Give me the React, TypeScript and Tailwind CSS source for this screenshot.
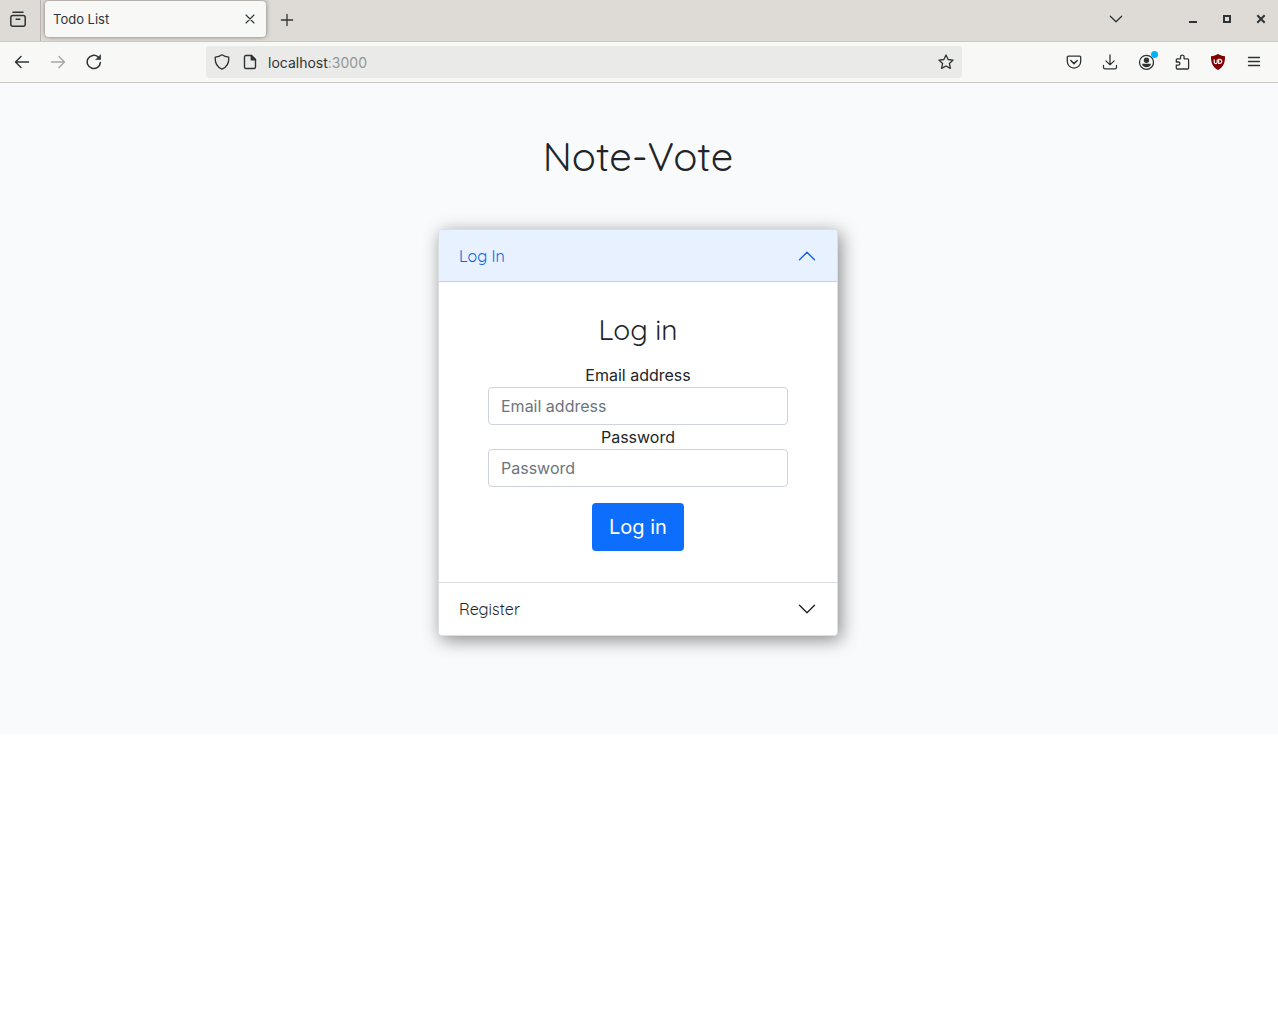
import React, { useState } from "react";

const stroke = {
  fill: "none",
  stroke: "currentColor",
  strokeWidth: 1.3,
  strokeLinecap: "round" as const,
  strokeLinejoin: "round" as const,
};

function Icon({ children, width = 1.3 }: { children: React.ReactNode; width?: number }) {
  return (
    <svg className="size-4 shrink-0" viewBox="0 0 16 16" {...stroke} strokeWidth={width} aria-hidden="true">
      {children}
    </svg>
  );
}

function ToolButton({ label, className = "", children }: { label: string; className?: string; children: React.ReactNode }) {
  return (
    <button type="button" aria-label={label} className={`flex size-8 shrink-0 items-center justify-center ${className}`}>
      {children}
    </button>
  );
}

function TabBar() {
  return (
    <div className="flex h-[42px] items-stretch border-b border-[#cdc7c2] bg-[#dedad5]">
      <div className="flex w-[41px] items-center border-r border-[#b9b4af] pb-1 pl-0.5">
        <ToolButton label="Recent browsing">
          <svg className="size-4" viewBox="0 0 16 16" {...stroke} strokeWidth={1.5} aria-hidden="true">
            <rect x="0.8" y="4.4" width="14.4" height="10.8" rx="2" />
            <path d="M3 1.2h10M6.2 8.2h3.6" />
          </svg>
        </ToolButton>
      </div>
      <div className="ml-1 mt-px flex h-9 w-[221px] items-center justify-between rounded bg-[#f8f8f7] pl-2 shadow-[0_0_4px_rgba(0,0,0,0.45)]">
        <span className="text-[13px] leading-5">Todo List</span>
        <ToolButton label="Close tab">
          <Icon width={1.1}>
            <path d="M4 4l8 8M12 4l-8 8" />
          </Icon>
        </ToolButton>
      </div>
      <ToolButton label="New tab" className="ml-[5px] mt-1">
        <Icon>
          <path d="M8 2.4v11.2M2.4 8h11.2" />
        </Icon>
      </ToolButton>
      <div className="ml-auto flex items-center pb-1">
        <ToolButton label="List all tabs" className="mr-[45px]">
          <Icon>
            <path d="M2.3 5.2L8 10.7l5.7-5.5" />
          </Icon>
        </ToolButton>
        <ToolButton label="Minimize" className="mr-0.5">
          <svg className="size-4" viewBox="0 0 16 16" aria-hidden="true">
            <path d="M4 10h8v2H4z" fill="currentColor" />
          </svg>
        </ToolButton>
        <ToolButton label="Maximize" className="mr-0.5">
          <svg className="size-4" viewBox="0 0 16 16" fill="none" stroke="currentColor" strokeWidth={2} aria-hidden="true">
            <path d="M5 5h6v6H5z" />
          </svg>
        </ToolButton>
        <ToolButton label="Close" className="mr-px">
          <svg className="size-4" viewBox="0 0 16 16" fill="none" stroke="currentColor" strokeWidth={2} aria-hidden="true">
            <path d="M4.300 4.300l7.400 7.400M11.700 4.300l-7.400 7.400" />
          </svg>
        </ToolButton>
      </div>
    </div>
  );
}

function Toolbar() {
  return (
    <div className="flex h-[41px] items-center justify-between border-b border-[#cdc7c2] bg-[#f8f8f7]">
      <div className="flex w-[206px] shrink-0 gap-1 pl-1.5">
        <ToolButton label="Back">
          <Icon width={1.5}>
            <path d="M14.500 8H1.500M7 2.500L1.500 8L7 13.500" />
          </Icon>
        </ToolButton>
        <ToolButton label="Forward" className="opacity-40">
          <Icon width={1.5}>
            <path d="M1.500 8h13M9 2.500L14.500 8L9 13.500" />
          </Icon>
        </ToolButton>
        <ToolButton label="Reload">
          <Icon width={1.5}>
            <path d="M14.400 8.400A6.600 6.600 0 1 1 12.200 3" />
            <path d="M14.600 1v4.600H10z" fill="currentColor" strokeWidth="0.6" />
          </Icon>
        </ToolButton>
      </div>
      <div className="flex h-8 min-w-0 flex-1 items-center rounded bg-[#eaeae9] pl-2">
        <Icon>
          <path d="M8 .8C6 2.200 3.700 2.900 1.200 3.200C.9 8.800 3 13 8 15.200C13 13 15.100 8.800 14.800 3.200C12.300 2.900 10 2.200 8 .8z" />
        </Icon>
        <span className="ml-3 flex">
          <Icon width={1.4}>
            <path d="M3.800 1.500h5.700l4 4v7.500a1.500 1.500 0 0 1-1.500 1.500H3.800a1.300 1.300 0 0 1-1.300-1.300V2.800a1.300 1.300 0 0 1 1.300-1.300z" />
            <path d="M9.300 1.500v4.200h4.200z" fill="currentColor" />
          </Icon>
        </span>
        <span className="ml-2.5 flex-1 pt-0.5 text-sm">
          localhost<span className="text-[#929595]">:3000</span>
        </span>
        <ToolButton label="Bookmark this page">
          <Icon>
            <path d="M8 1l2.100 4.500 5 .6-3.700 3.400 1 4.900L8 12l-4.400 2.400 1-4.900L.9 6.100l5-.6z" />
          </Icon>
        </ToolButton>
      </div>
      <div className="flex shrink-0 items-center gap-1 pl-24 pr-2">
        <ToolButton label="Save to Pocket">
          <Icon>
            <path d="M2.500 2.200h11a1.200 1.200 0 0 1 1.200 1.200v4a6.700 6.700 0 0 1-13.400 0v-4a1.200 1.200 0 0 1 1.200-1.200z" />
            <path d="M4.800 6.500L8 9.600l3.200-3.100" strokeWidth="1.500" />
          </Icon>
        </ToolButton>
        <ToolButton label="Downloads">
          <Icon>
            <path d="M8 .8v10M3.900 6.900L8 10.900l4.100-4M1.500 11.500v1.700a1.600 1.600 0 0 0 1.600 1.600h9.800a1.600 1.600 0 0 0 1.600-1.600v-1.700" />
          </Icon>
        </ToolButton>
        <ToolButton label="Account" className="relative">
          <Icon>
            <circle cx="8.500" cy="8.300" r="7" />
            <circle cx="8.500" cy="6.200" r="2.700" fill="currentColor" stroke="none" />
            <path d="M4 9.800h9c-.2 2-2 3.500-4.500 3.500S4.200 11.800 4 9.800z" fill="currentColor" stroke="none" />
          </Icon>
          <span className="absolute right-1 top-[5px] size-[7px] rounded-full bg-[#00b3f4]" />
        </ToolButton>
        <ToolButton label="Extensions">
          <Icon>
            <path d="M6.500 4.800V2.900a1.800 1.800 0 0 1 3.600 0v1.900h3.500a1 1 0 0 1 1 1v8.200a1 1 0 0 1-1 1H3.300a1 1 0 0 1-1-1v-2.800h2a1.500 1.500 0 0 0 0-3.200h-2V5.800a1 1 0 0 1 1-1z" />
          </Icon>
        </ToolButton>
        <ToolButton label="uBlock Origin">
          <svg className="size-4" viewBox="0 0 16 16" fill="none" aria-hidden="true">
            <path d="M8 0c2 1.300 4.300 2 7 2.200C15.200 9 13 13.300 8 16C3 13.300.8 9 1 2.200C3.700 2 6 1.300 8 0z" fill="#800000" />
            <path d="M4.200 5.400v2.700a1.500 1.500 0 0 0 3 0V5.400M8.700 5.400v4.100h1a2 2 0 0 0 0-4.100z" stroke="#fff" strokeWidth="1.200" />
          </svg>
        </ToolButton>
        <ToolButton label="Menu">
          <Icon>
            <path d="M2.500 3.500h11M2.500 7.500h11M2.500 11.500h11" />
          </Icon>
        </ToolButton>
      </div>
    </div>
  );
}

function Chevron({ up }: { up: boolean }) {
  return (
    <svg className={up ? "size-5 rotate-180" : "size-5"} viewBox="0 0 16 16" {...stroke} strokeWidth={1.1} aria-hidden="true">
      <path d="M2 5l6 6 6-6" />
    </svg>
  );
}

function Header({ title, open, onClick }: { title: string; open: boolean; onClick: () => void }) {
  return (
    <h2>
      <button
        type="button"
        aria-expanded={open}
        onClick={onClick}
        className={`flex h-[52px] w-full items-center justify-between px-5 font-[Quicksand,Lato,sans-serif] text-base font-normal ${
          open ? "border-b border-[#c6cfe2] bg-[#e7f1ff] text-[#0c63e4]" : "bg-white text-[#212529]"
        }`}
      >
        {title}
        <Chevron up={open} />
      </button>
    </h2>
  );
}

function Field({ id, label, type }: { id: string; label: string; type: string }) {
  return (
    <>
      <label htmlFor={id} className="text-base leading-6">
        {label}
      </label>
      <input
        id={id}
        type={type}
        placeholder={label}
        className="h-[38px] w-full rounded border border-[#ced4da] bg-white px-3 text-base placeholder:text-[#6c757d]"
      />
    </>
  );
}

function AuthForm({ prefix, title }: { prefix: string; title: string }) {
  return (
    <form
      onSubmit={(e) => e.preventDefault()}
      className="mx-auto flex w-full max-w-[300px] flex-col items-center py-[31px]"
    >
      <h3 className="mb-4 font-[Quicksand,Lato,sans-serif] text-[28px] font-normal leading-[34px]">{title}</h3>
      <Field id={`${prefix}-email`} label="Email address" type="email" />
      <Field id={`${prefix}-password`} label="Password" type="password" />
      <button type="submit" className="mt-4 h-12 rounded bg-[#0d6efd] px-[17px] text-xl text-white">
        {title}
      </button>
    </form>
  );
}

export default function App() {
  const [open, setOpen] = useState("login");
  const toggle = (name: string) => setOpen(open === name ? "" : name);
  return (
    <div className="min-h-screen bg-white font-[Inter,sans-serif] text-[#212529]">
      <header className="text-[#2e3436]">
        <TabBar />
        <Toolbar />
      </header>
      <main className="flex flex-col items-center bg-[#f8fafc] pb-[98px] pr-0.5 pt-12">
        <h1 className="font-[Quicksand,Lato,sans-serif] text-[40px] font-normal leading-[50px]">Note-Vote</h1>
        <div className="mt-12 w-full max-w-[400px] overflow-hidden rounded border border-[#dcdedf] bg-white shadow-[3px_4px_18px_rgba(0,0,0,0.45)]">
          <Header title="Log In" open={open === "login"} onClick={() => toggle("login")} />
          {open === "login" && <AuthForm prefix="login" title="Log in" />}
          <div className="border-t border-[#dcdedf]">
            <Header title="Register" open={open === "register"} onClick={() => toggle("register")} />
            {open === "register" && <AuthForm prefix="register" title="Register" />}
          </div>
        </div>
      </main>
    </div>
  );
}
